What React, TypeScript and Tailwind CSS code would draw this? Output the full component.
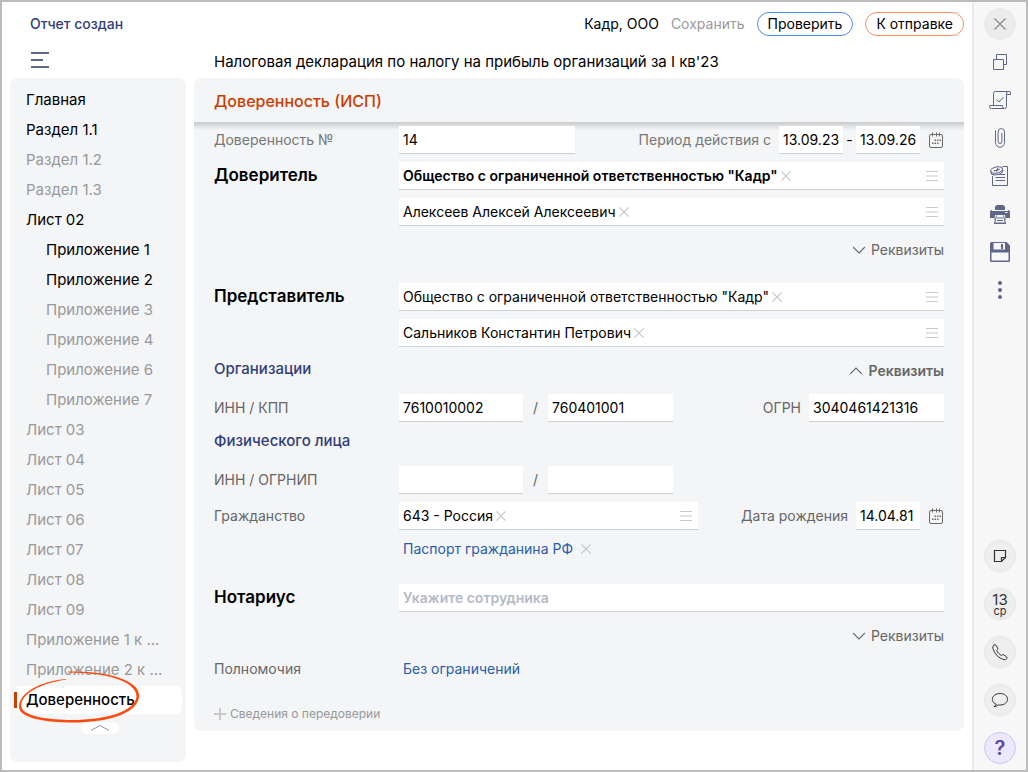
import { useId, useState, type ReactNode } from "react";

const sections = [
  { title: "Главная", filled: true },
  { title: "Раздел 1.1", filled: true },
  { title: "Раздел 1.2" },
  { title: "Раздел 1.3" },
  { title: "Лист 02", filled: true },
  { title: "Приложение 1", filled: true, nested: true },
  { title: "Приложение 2", filled: true, nested: true },
  { title: "Приложение 3", nested: true },
  { title: "Приложение 4", nested: true },
  { title: "Приложение 6", nested: true },
  { title: "Приложение 7", nested: true },
  { title: "Лист 03" },
  { title: "Лист 04" },
  { title: "Лист 05" },
  { title: "Лист 06" },
  { title: "Лист 07" },
  { title: "Лист 08" },
  { title: "Лист 09" },
  { title: "Приложение 1 к ..." },
  { title: "Приложение 2 к ..." },
];

function Cross({ className }: { className: string }) {
  return (
    <svg viewBox="0 0 10 10" className={className} fill="none" stroke="currentColor" strokeWidth="1.1" aria-hidden="true">
      <path d="M.4.4l9.2 9.2M9.6.4L.4 9.6" />
    </svg>
  );
}

function ClearButton() {
  return (
    <button type="button" aria-label="Очистить" className="shrink-0 text-[#c4c4c4]">
      <Cross className="size-[10px]" />
    </button>
  );
}

function CalendarButton() {
  return (
    <button type="button" aria-label="Выбрать дату" className="ml-2 shrink-0 text-[#6b6b6b]">
      <svg viewBox="0 0 16 16" className="size-4" fill="none" stroke="currentColor" aria-hidden="true">
        <rect x="1.5" y="2.5" width="13" height="13" rx="1.5" />
        <path d="M4.5.5v4M8.5.5v4M11.5.5v4" />
        <g fill="currentColor" stroke="none">
          <rect x="6.5" y="7.5" width="1.5" height="1.5" />
          <rect x="9" y="7.5" width="1.5" height="1.5" />
          <rect x="11.5" y="7.5" width="1.5" height="1.5" />
          <rect x="4" y="10.5" width="1.5" height="1.5" />
          <rect x="6.5" y="10.5" width="1.5" height="1.5" />
          <rect x="9" y="10.5" width="1.5" height="1.5" />
        </g>
      </svg>
    </button>
  );
}

const boxClass = "h-7 border-b border-[#cdd0d4] bg-white px-1 text-black outline-none";

function TextBox({ label, value, width }: { label: string; value: string; width: string }) {
  return <input aria-label={label} defaultValue={value} className={`${boxClass} ${width}`} />;
}

function Picker({ label, value, bold, width = "flex-1" }: { label: string; value: string; bold?: boolean; width?: string }) {
  return (
    <div className={`flex items-center gap-[3px] ${boxClass} ${width}`}>
      <input
        aria-label={label}
        defaultValue={value}
        className={`field-sizing-content min-w-0 bg-transparent outline-none ${bold ? "font-semibold" : ""}`}
      />
      <ClearButton />
      <button type="button" aria-label="Выбрать из списка" className="mr-[2px] ml-auto shrink-0 text-[#c9c9c9]">
        <svg viewBox="0 0 12 10" className="h-[10px] w-3" stroke="currentColor" aria-hidden="true">
          <path d="M0 .5h12M0 5h12M0 9.5h12" />
        </svg>
      </button>
    </div>
  );
}

function Row({ label, children, className = "mt-2" }: { label?: ReactNode; children?: ReactNode; className?: string }) {
  return (
    <div className={`flex items-center ${className}`}>
      <div className="w-[185px] shrink-0">{label}</div>
      <div className="flex min-w-0 flex-1 items-center">{children}</div>
    </div>
  );
}

function GroupTitle({ children }: { children: string }) {
  return <h3 className="pb-[2px] text-[17px] leading-6 font-semibold text-black">{children}</h3>;
}

function Details({ initiallyOpen = false }: { initiallyOpen?: boolean }) {
  const [open, setOpen] = useState(initiallyOpen);
  return (
    <button
      type="button"
      aria-expanded={open}
      onClick={() => setOpen(!open)}
      className={`ml-auto flex items-center gap-[6px] ${open ? "font-semibold" : ""}`}
    >
      <svg viewBox="0 0 12 8" className="h-2 w-3" fill="none" stroke="currentColor" strokeWidth="1.2" aria-hidden="true">
        <path d={open ? "M0 7l6-6 6 6" : "M0 1l6 6 6-6"} />
      </svg>
      Реквизиты
    </button>
  );
}

function Tool({ label, children }: { label: string; children: ReactNode }) {
  return (
    <button type="button" aria-label={label} className="text-[#5f6788]">
      <svg viewBox="0 0 24 24" className="size-6" fill="none" stroke="currentColor" aria-hidden="true">
        {children}
      </svg>
    </button>
  );
}

function RoundButton({ label, children }: { label: string; children: ReactNode }) {
  return (
    <button
      type="button"
      aria-label={label}
      className="flex size-8 flex-col items-center justify-center rounded-full border border-[#e4e4e4] bg-[#eeeeee] text-[#333333]"
    >
      {children}
    </button>
  );
}

function Toolbar() {
  return (
    <aside className="flex w-[54px] shrink-0 flex-col items-center justify-between border-l-2 border-[#ebebeb] bg-[#f7f7f7] pt-[6px] pb-[6px]">
      <div className="flex flex-col items-center gap-[14px]">
        <button type="button" aria-label="Закрыть" className="-mb-1 flex size-8 items-center justify-center rounded-full bg-[#ebebeb] text-[#8b8b93]">
          <Cross className="size-3" />
        </button>
        <Tool label="Копировать">
          <path d="M8.5 9.5v-5h10v10h-3M5.5 9.5h10v10h-10z" />
        </Tool>
        <Tool label="Проверить документ">
          <path d="M5.5 17.5V5.5q0-2 2-2H21q1.5 0 1.5 1.5v1.5h-4M18.5 6.5V5q0-1.500 1.500-1.500M18.500 6.500v12q0 2-2 2M16.500 20.500h-13q-2 0-2-2v-1h13v1q0 2 2 2M8.500 11.500l2.500 2.500 4.500-5" />
        </Tool>
        <Tool label="Вложения">
          <path d="M7.5 4.5v12a4.500 4.800 0 0 0 9 0V6a3.200 3.500 0 0 0-6.400 0v9.500a1.900 2 0 0 0 3.800 0V7" />
        </Tool>
        <Tool label="Документы">
          <path d="M14.5 2.5h5v19h-15v-9.500M10.500 10.500H17M7.500 13.500H17M7.500 16.500H17" />
          <g transform="rotate(-12 8.7 6.5)">
            <ellipse cx="8.7" cy="6" rx="6" ry="3" />
            <path d="M2.7 6v1.500c0 4.200 12 4.200 12 0V6" />
            <path d="M5.5 6.300l6.500-.3M8.300 7.700l2-3.400" />
          </g>
        </Tool>
        <Tool label="Печать">
          <path d="M7 8V4.500L9 3h6l2 1.500V8h3q2 0 2 2v6h-4v5.500H6V16H2v-6q0-2 2-2z" fill="currentColor" stroke="none" />
          <path d="M4 8.500h16" stroke="#f7f7f7" />
          <path d="M7 13h10l1 7.500H6z" fill="#f7f7f7" stroke="none" />
          <path d="M8.500 13.500L6.500 21.500h11l-2-8M9 16h6M9 18.500h6" />
          <path d="M17 10.500h2.500" stroke="#f7f7f7" />
        </Tool>
        <Tool label="Сохранить">
          <path d="M3.5 2h15L22 5.500v15q0 1.500-1.500 1.500h-17Q2 22 2 20.500v-17Q2 2 3.500 2z" fill="currentColor" stroke="none" />
          <path d="M5.5 3H17v6.500H5.500zM3.500 12.500h17v8h-17z" fill="#f7f7f7" stroke="none" />
          <path d="M13 4h2v5h-2z" fill="currentColor" stroke="none" />
        </Tool>
        <Tool label="Ещё">
          <g fill="currentColor" stroke="none">
            <circle cx="12" cy="5" r="2" />
            <circle cx="12" cy="12" r="2" />
            <circle cx="12" cy="19" r="2" />
          </g>
        </Tool>
      </div>
      <div className="flex flex-col gap-4">
        <RoundButton label="Заметка">
          <svg viewBox="0 0 24 24" className="size-6 shrink-0" fill="none" stroke="currentColor" strokeWidth="1.2" aria-hidden="true">
            <path d="M6.5 6.500h11v7l-4 4h-7zM17.500 13.500h-4v4" />
          </svg>
        </RoundButton>
        <RoundButton label="Календарь">
          <span className="text-[15px] leading-[13px]">13</span>
          <span className="text-[11px] leading-[10px]">ср</span>
        </RoundButton>
        <RoundButton label="Позвонить">
          <svg viewBox="0 0 24 24" className="size-6 shrink-0" fill="none" stroke="currentColor" aria-hidden="true">
            <path d="M6 5q1.200-.8 2 .3l1.700 2.900q.5 1-.3 1.700l-.7.700q1.500 3 4.600 4.900l1-.6q.9-.5 1.700.1l2.600 1.900q1 .9.200 1.800-1.200 1.400-3 .9Q8 17.500 4.900 8.500 4.400 6.300 6 5z" />
          </svg>
        </RoundButton>
        <RoundButton label="Чат">
          <svg viewBox="0 0 24 24" className="size-6 shrink-0" fill="none" stroke="currentColor" aria-hidden="true">
            <path d="M8.300 16.300C1.500 13.500 4 5.500 12 5.500c10 0 10 11.500 0 11.500q-.8 0-1.700-.1Q8.300 18.800 5.800 18.700 7.800 18 8.300 16.300z" />
          </svg>
        </RoundButton>
        <button type="button" aria-label="Справка" className="flex size-8 items-center justify-center rounded-full border border-[#d0c6f5] bg-[#ece8fd] text-xl font-semibold text-[#5a4aa5]">
          ?
        </button>
      </div>
    </aside>
  );
}

function Sidebar() {
  return (
    <nav aria-label="Разделы отчета" className="flex w-44 shrink-0 flex-col rounded-lg bg-[#f3f5f7] px-1 pt-[7px] text-[15px]">
      {sections.map((s) => (
        <a
          key={s.title}
          href="#"
          className={`flex h-[30px] items-center ${s.nested ? "pl-8" : "pl-3"} ${s.filled ? "text-black" : "text-[#999999]"}`}
        >
          {s.title}
        </a>
      ))}
      <div className="relative my-px">
        <a href="#" aria-current="page" className="flex h-7 items-center rounded-md bg-white font-medium text-black">
          <span className="mr-[9px] h-4 w-[3px] bg-[#cc3d00]" />
          Доверенность
        </a>
        <svg viewBox="0 0 124 56" className="pointer-events-none absolute top-[-16px] left-1 h-14 w-[124px]" fill="#ff4a0d" aria-hidden="true">
          <path d="M48 9.700C24 12.500 3.200 23.500 3.200 35.500 3.200 46.500 32 50 54 50c34 0 63-8.500 64.500-23.500C118.500 14 96 2.600 50 2.600V1.600C97 .8 123 13 121 27c-2 16.500-31 25.500-66 25.500C28 52.500 1 48.500 1 36.500 1 23 22 11.200 48 9z" />
        </svg>
      </div>
      <button type="button" aria-label="Прокрутить вверх" className="mt-[7px] ml-[67px] flex h-3 w-[38px] items-center justify-center rounded-md bg-white text-[#9095ad]">
        <svg viewBox="0 0 18 6" className="h-[6px] w-[18px]" fill="none" stroke="currentColor" aria-hidden="true">
          <path d="M0 5.500l9-5 9 5" />
        </svg>
      </button>
    </nav>
  );
}

export default function App() {
  const id = useId();
  return (
    <div className="flex min-h-screen border-2 border-[#bbbbbb] bg-white font-['Inter',sans-serif] text-sm leading-5 text-[#666666]">
      <div className="flex min-w-0 flex-1 flex-col px-2 pb-2">
        <header className="flex h-11 items-center pl-5">
          <span className="mr-auto font-medium text-[#313e78]">Отчет создан</span>
          <span className="text-black">Кадр, ООО</span>
          <button type="button" className="ml-3 text-[#999999]">Сохранить</button>
          <button type="button" className="ml-3 h-6 rounded-full border border-[#4a90e2] px-[10px] text-black">Проверить</button>
          <button type="button" className="ml-3 h-6 rounded-full border border-[#ff8a65] px-[10px] text-black">К отправке</button>
        </header>
        <div className="flex h-8 items-center">
          <div className="w-[204px] shrink-0 pb-1 pl-5">
            <button type="button" aria-label="Меню" className="block text-[#5f6788]">
              <svg viewBox="0 0 20 18" className="h-[18px] w-5" stroke="currentColor" strokeWidth="2" aria-hidden="true">
                <path d="M1 2h18M1 9h12M1 16h18" />
              </svg>
            </button>
          </div>
          <h1 className="text-[15px] text-black">Налоговая декларация по налогу на прибыль организаций за I кв'23</h1>
        </div>
        <div className="flex flex-1 items-start gap-2">
          <div className="flex self-stretch">
            <Sidebar />
          </div>
          <main className="min-w-0 flex-1 rounded-lg bg-[#f3f5f7]">
            <h2 className="flex h-11 items-center rounded-t-lg px-5 pt-[2px] text-base font-medium text-[#cc3d00]">Доверенность (ИСП)</h2>
            <form className="rounded-b-lg bg-linear-to-b from-[#c8cacc] to-[#f3f5f7] to-[8px] px-5 pt-1 pb-[5px]">
              <Row className="" label={<label htmlFor={`${id}n`} className="text-[#777777]">Доверенность №</label>}>
                <input id={`${id}n`} defaultValue="14" className={`w-44 ${boxClass}`} />
                <label htmlFor={`${id}from`} className="mr-2 ml-auto text-[#777777]">Период действия с</label>
                <input id={`${id}from`} defaultValue="13.09.23" className={`w-16 ${boxClass}`} />
                <span className="w-[13px] text-center text-black">-</span>
                <TextBox label="Период действия по" value="13.09.26" width="w-16" />
                <CalendarButton />
              </Row>

              <Row label={<GroupTitle>Доверитель</GroupTitle>}>
                <Picker label="Организация доверителя" value={'Общество с ограниченной ответственностью "Кадр"'} bold />
              </Row>
              <Row>
                <Picker label="Руководитель доверителя" value="Алексеев Алексей Алексеевич" />
              </Row>
              <Row className="mt-2 h-8">
                <Details />
              </Row>

              <Row className="mt-[17px]" label={<GroupTitle>Представитель</GroupTitle>}>
                <Picker label="Организация представителя" value={'Общество с ограниченной ответственностью "Кадр"'} />
              </Row>
              <Row>
                <Picker label="Представитель" value="Сальников Константин Петрович" />
              </Row>
              <Row className="mt-2 h-[31px]" label={<h4 className="pb-1 text-[15px] font-medium text-[#313e78]">Организации</h4>}>
                <Details initiallyOpen />
              </Row>
              <Row label="ИНН / КПП">
                <TextBox label="ИНН организации" value="7610010002" width="w-[124px]" />
                <span className="w-[25px] text-center">/</span>
                <TextBox label="КПП" value="760401001" width="w-[125px]" />
                <label htmlFor={`${id}ogrn`} className="mr-2 ml-auto">ОГРН</label>
                <input id={`${id}ogrn`} defaultValue="3040461421316" className={`w-[135px] ${boxClass}`} />
              </Row>
              <Row className="mt-2 h-[22px]" label={<h4 className="text-[15px] font-medium text-[#313e78]">Физического лица</h4>} />
              <Row className="mt-[14px]" label="ИНН / ОГРНИП">
                <TextBox label="ИНН физического лица" value="" width="w-[124px]" />
                <span className="w-[25px] text-center">/</span>
                <TextBox label="ОГРНИП" value="" width="w-[125px]" />
              </Row>
              <Row label="Гражданство">
                <Picker label="Гражданство" value="643 - Россия" width="w-[299px]" />
                <label htmlFor={`${id}birth`} className="mr-2 ml-auto">Дата рождения</label>
                <input id={`${id}birth`} defaultValue="14.04.81" className={`w-16 ${boxClass}`} />
                <CalendarButton />
              </Row>
              <Row className="mt-2 h-[22px]">
                <a href="#" className="mr-2 ml-1 text-[#2a5caa]">Паспорт гражданина РФ</a>
                <ClearButton />
              </Row>

              <Row className="mt-6" label={<GroupTitle>Нотариус</GroupTitle>}>
                <input aria-label="Нотариус" placeholder="Укажите сотрудника" className={`min-w-0 flex-1 font-semibold placeholder:text-[#b5bac8] ${boxClass}`} />
              </Row>
              <Row className="mt-2 h-8">
                <Details />
              </Row>
              <Row className="h-[34px]" label="Полномочия">
                <a href="#" className="ml-1 text-[#2a5caa]">Без ограничений</a>
              </Row>
              <button type="button" className="mt-[15px] flex h-[25px] items-center gap-1 text-xs text-[#999999]">
                <svg viewBox="0 0 12 12" className="size-3" stroke="#c9c9c9" strokeWidth="2" aria-hidden="true">
                  <path d="M0 6h12M6 0v12" />
                </svg>
                Сведения о передоверии
              </button>
            </form>
          </main>
        </div>
      </div>
      <Toolbar />
    </div>
  );
}
